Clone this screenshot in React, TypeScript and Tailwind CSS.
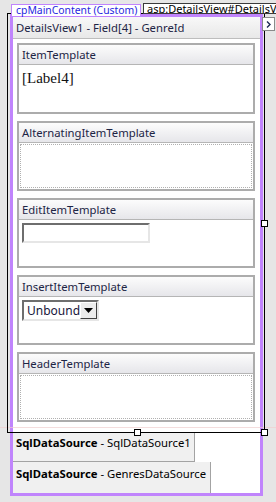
import React from "react";

type PanelProps = {
  title: string;
  tall?: boolean;
  dotted?: boolean;
  children?: React.ReactNode;
};

function Panel({ title, tall, dotted, children }: PanelProps) {
  return (
    <div
      className={`flex flex-col border-2 border-[#acacac] bg-white ${tall ? "h-[71px]" : "h-[70px]"}`}
    >
      <div className="h-[20px] shrink-0 flex items-center pl-[3px] border-b border-[#b5b5b5] bg-linear-to-b from-[#fcfcfc] to-[#e6e6ea] text-[11.3px] leading-none text-[#1d2545] whitespace-nowrap">
        {title}
      </div>
      {dotted ? (
        <div className="flex-1 m-px border border-dotted border-[#b0b0b0]" />
      ) : (
        <div className="flex-1">{children}</div>
      )}
    </div>
  );
}

export default function App() {
  return (
    <div className="relative w-[276px] h-[502px] overflow-hidden bg-[#e6e6e6] font-['Noto_Sans','Open_Sans',sans-serif]">
      <div className="pl-[10px] pt-[14px]">
        <div className="w-[253px] h-[482px] border-[3px] border-[#c084fc] bg-white flex flex-col">
          {/* DetailsView */}
          <div className="h-[415px] shrink-0 flex flex-col">
            <div className="h-[22px] shrink-0 flex items-center pl-[3px] border-b border-[#bdbdbd] bg-linear-to-b from-[#f8f8f8] to-[#e8e8e8] text-[11.3px] leading-none text-[#1d2545] whitespace-nowrap">
              DetailsView1 - Field[4] - GenreId
            </div>
            <div className="flex flex-col gap-[7px] pt-[4px] pl-[4px] pr-[5px]">
              <Panel title="ItemTemplate" tall>
                <div className="ml-[3px] mt-[5px] text-[15px] leading-[17px] text-[#111] font-['Liberation_Serif','Times_New_Roman',serif]">
                  [Label4]
                </div>
              </Panel>
              <Panel title="AlternatingItemTemplate" dotted />
              <Panel title="EditItemTemplate">
                <div className="ml-[3px] mt-[3px] w-[128px] h-[20px] border-2 border-t-[#6e6e6e] border-l-[#6e6e6e] border-r-[#e6e6e6] border-b-[#e6e6e6] bg-white" />
              </Panel>
              <Panel title="InsertItemTemplate">
                <div className="ml-[3px] mt-[3px] w-[77px] h-[21px] flex border-2 border-t-[#6e6e6e] border-l-[#6e6e6e] border-r-[#e6e6e6] border-b-[#e6e6e6] bg-white">
                  <div className="flex-1 pl-[3px] text-[12px] leading-[17px] text-[#16163a] whitespace-nowrap">
                    Unbound
                  </div>
                  <div className="w-[17px] h-full flex items-center justify-center bg-[#ececec] border border-t-[#ffffff] border-l-[#ffffff] border-r-[#404040] border-b-[#404040]">
                    <svg width="9" height="5" viewBox="0 0 9 5">
                      <polygon points="0,0 9,0 4.5,5" fill="#000" />
                    </svg>
                  </div>
                </div>
              </Panel>
              <Panel title="HeaderTemplate" dotted />
            </div>
          </div>
          {/* Data sources */}
          <div className="w-[182px] h-[30px] shrink-0 bg-[#f0f0f0] border-r border-b border-[#a3a3a3] pl-[3px] pt-[3px] text-[11.3px] leading-[16px] text-black whitespace-nowrap">
            <span className="font-bold">SqlDataSource</span> - SqlDataSource1
          </div>
          <div className="w-[198px] flex-1 bg-[#f0f0f0] border-r border-[#a3a3a3] pl-[3px] pt-[4px] text-[11.3px] leading-[16px] text-black whitespace-nowrap">
            <span className="font-bold">SqlDataSource</span> - GenresDataSource
          </div>
        </div>
      </div>

      {/* faint guide line */}
      <div className="absolute left-0 top-[427px] w-[276px] h-px bg-[#f0cfcf] opacity-70" />

      {/* selection rectangle */}
      <div className="absolute left-[7px] top-[13px] w-[258px] h-[420px] border border-black pointer-events-none" />
      <div className="absolute left-[261px] top-[220px] w-[7px] h-[7px] border border-black bg-white" />
      <div className="absolute left-[261px] top-[429px] w-[7px] h-[7px] border border-black bg-white" />
      <div className="absolute left-[134px] top-[429px] w-[7px] h-[7px] border border-black bg-white" />

      {/* content placeholder tab */}
      <div className="absolute left-[11px] top-[4px] w-[130px] h-[13px] border border-[#c084fc] bg-white pl-[4px] text-[10.4px] leading-[11px] text-[#1f1fe0] whitespace-nowrap">
        cpMainContent (Custom)
      </div>

      {/* control tag */}
      <div className="absolute left-[143px] top-[3px] w-[140px] h-[11px] border border-[#3a3a3a] bg-white pl-[3px] text-[11px] leading-[9px] text-black whitespace-nowrap overflow-hidden">
        asp:DetailsView#DetailsView1
      </div>

      {/* smart tag */}
      <div className="absolute left-[262px] top-[17px] w-[13px] h-[14px] border border-[#8a8a8a] bg-white flex items-center justify-center">
        <svg width="5" height="7" viewBox="0 0 5 7">
          <polyline points="1,0.5 4,3.5 1,6.5" fill="none" stroke="#1c2a55" strokeWidth="1.4" />
        </svg>
      </div>
    </div>
  );
}
